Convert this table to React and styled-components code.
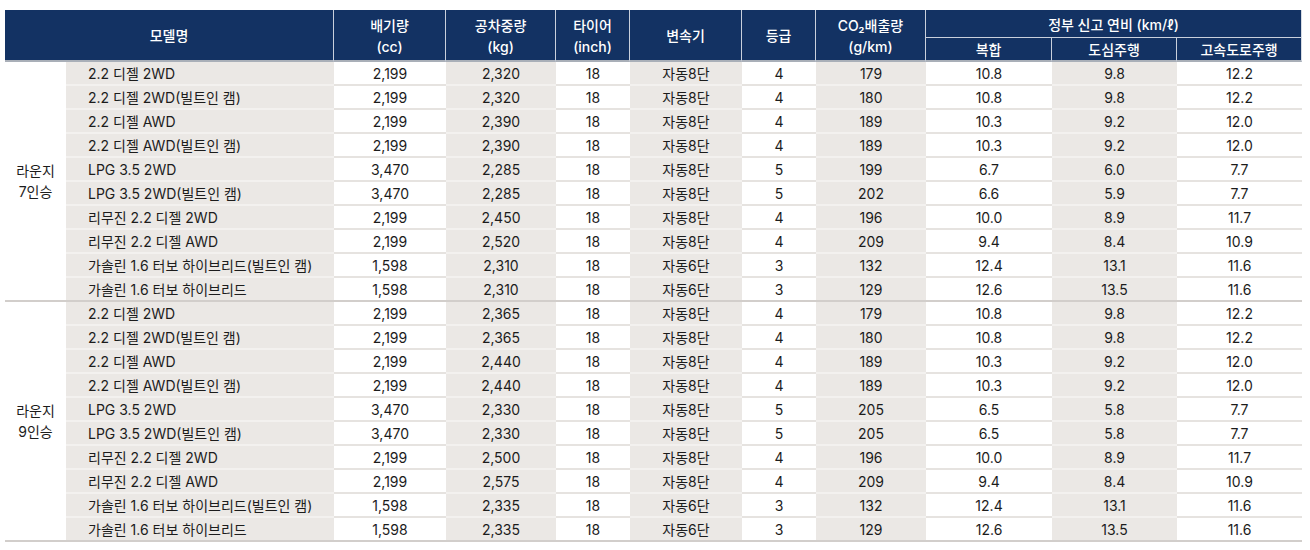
import React from "react";
import styled, { createGlobalStyle } from "styled-components";

const GlobalStyle = createGlobalStyle`
  body {
    margin: 0;
    background: #fff;
    font-family: "Inter", "Noto Sans CJK KR", sans-serif;
  }
`;

const models = [
  ["2.2 디젤 2WD", "4"],
  ["2.2 디젤 2WD(빌트인 캠)", "4"],
  ["2.2 디젤 AWD", "4"],
  ["2.2 디젤 AWD(빌트인 캠)", "4"],
  ["LPG 3.5 2WD", "5"],
  ["LPG 3.5 2WD(빌트인 캠)", "5"],
  ["리무진 2.2 디젤 2WD", "4"],
  ["리무진 2.2 디젤 AWD", "4"],
  ["가솔린 1.6 터보 하이브리드(빌트인 캠)", "3"],
  ["가솔린 1.6 터보 하이브리드", "3"],
];

const cc = ["2,199", "2,199", "2,199", "2,199", "3,470", "3,470", "2,199", "2,199", "1,598", "1,598"];
const gear = ["자동8단", "자동8단", "자동8단", "자동8단", "자동8단", "자동8단", "자동8단", "자동8단", "자동6단", "자동6단"];

const groups = [
  {
    label: ["라운지", "7인승"],
    weight: ["2,320", "2,320", "2,390", "2,390", "2,285", "2,285", "2,450", "2,520", "2,310", "2,310"],
    co2: ["179", "180", "189", "189", "199", "202", "196", "209", "132", "129"],
    eff: [
      ["10.8", "9.8", "12.2"], ["10.8", "9.8", "12.2"], ["10.3", "9.2", "12.0"], ["10.3", "9.2", "12.0"],
      ["6.7", "6.0", "7.7"], ["6.6", "5.9", "7.7"], ["10.0", "8.9", "11.7"], ["9.4", "8.4", "10.9"],
      ["12.4", "13.1", "11.6"], ["12.6", "13.5", "11.6"],
    ],
  },
  {
    label: ["라운지", "9인승"],
    weight: ["2,365", "2,365", "2,440", "2,440", "2,330", "2,330", "2,500", "2,575", "2,335", "2,335"],
    co2: ["179", "180", "189", "189", "205", "205", "196", "209", "132", "129"],
    eff: [
      ["10.8", "9.8", "12.2"], ["10.8", "9.8", "12.2"], ["10.3", "9.2", "12.0"], ["10.3", "9.2", "12.0"],
      ["6.5", "5.8", "7.7"], ["6.5", "5.8", "7.7"], ["10.0", "8.9", "11.7"], ["9.4", "8.4", "10.9"],
      ["12.4", "13.1", "11.6"], ["12.6", "13.5", "11.6"],
    ],
  },
];

const Page = styled.div`
  padding: 10px 8px 0 5px;
`;

const Table = styled.table`
  border-collapse: separate;
  border-spacing: 0;
  table-layout: fixed;
  width: 1297px;
  font-size: 14px;
  color: #1c1c1c;
`;

const Th = styled.th`
  background: #133263;
  color: #fff;
  font-weight: 500;
  font-size: 14px;
  line-height: 21px;
  text-align: center;
  padding: 1px 0 0;
  height: ${(p) => p.$h || 24}px;
  border-right: 1px solid #c9d0dc;
  border-bottom: ${(p) => (p.$last ? "2px solid #a9afb8" : "1px solid #c9d0dc")};
  box-sizing: border-box;
  &:last-child {
    border-right: 1px solid #d6dbe3;
  }
`;

const Td = styled.td`
  height: 24px;
  padding: 1px 0 0;
  box-sizing: border-box;
  text-align: ${(p) => (p.$left ? "left" : "center")};
  padding-left: ${(p) => (p.$left ? "22px" : "0")};
  background: ${(p) => (p.$shade ? "#ebe8e5" : "#fff")};
  border-bottom: 2px solid
    ${(p) => (p.$end ? "#d2cecb" : p.$shade ? "#f3f1ef" : "#e6e3e0")};
  white-space: nowrap;
  line-height: 20px;
`;

const GroupCell = styled.td`
  padding: 0;
  text-align: center;
  vertical-align: middle;
  line-height: 21px;
  background: #fff;
  border-bottom: 2px solid #d2cecb;
`;

const widths = [61, 268, 112, 110, 74, 112, 74, 110, 126, 125, 125];

const Sub = styled.span`
  display: block;
`;

export default function App() {
  return (
    <Page>
      <GlobalStyle />
      <Table>
        <colgroup>
          {widths.map((w, i) => (
            <col key={i} style={{ width: w }} />
          ))}
        </colgroup>
        <thead>
          <tr>
            <Th colSpan={2} rowSpan={2} $h={28} $last>모델명</Th>
            <Th rowSpan={2} $last><Sub>배기량</Sub><Sub>(cc)</Sub></Th>
            <Th rowSpan={2} $last><Sub>공차중량</Sub><Sub>(kg)</Sub></Th>
            <Th rowSpan={2} $last><Sub>타이어</Sub><Sub>(inch)</Sub></Th>
            <Th rowSpan={2} $last>변속기</Th>
            <Th rowSpan={2} $last>등급</Th>
            <Th rowSpan={2} $last><Sub>CO₂배출량</Sub><Sub>(g/km)</Sub></Th>
            <Th colSpan={3} $h={28}>정부 신고 연비 (km/ℓ)</Th>
          </tr>
          <tr>
            <Th $last>복합</Th>
            <Th $last>도심주행</Th>
            <Th $last>고속도로주행</Th>
          </tr>
        </thead>
        <tbody>
          {groups.map((g, gi) =>
            models.map((m, i) => {
              const end = i === models.length - 1;
              return (
                <tr key={`${gi}-${i}`}>
                  {i === 0 && (
                    <GroupCell rowSpan={10}>
                      {g.label[0]}
                      <br />
                      {g.label[1]}
                    </GroupCell>
                  )}
                  <Td $left $shade $end={end}>{m[0]}</Td>
                  <Td $end={end}>{cc[i]}</Td>
                  <Td $shade $end={end}>{g.weight[i]}</Td>
                  <Td $end={end}>18</Td>
                  <Td $shade $end={end}>{gear[i]}</Td>
                  <Td $end={end}>{m[1]}</Td>
                  <Td $shade $end={end}>{g.co2[i]}</Td>
                  <Td $end={end}>{g.eff[i][0]}</Td>
                  <Td $shade $end={end}>{g.eff[i][1]}</Td>
                  <Td $end={end}>{g.eff[i][2]}</Td>
                </tr>
              );
            })
          )}
        </tbody>
      </Table>
    </Page>
  );
}
